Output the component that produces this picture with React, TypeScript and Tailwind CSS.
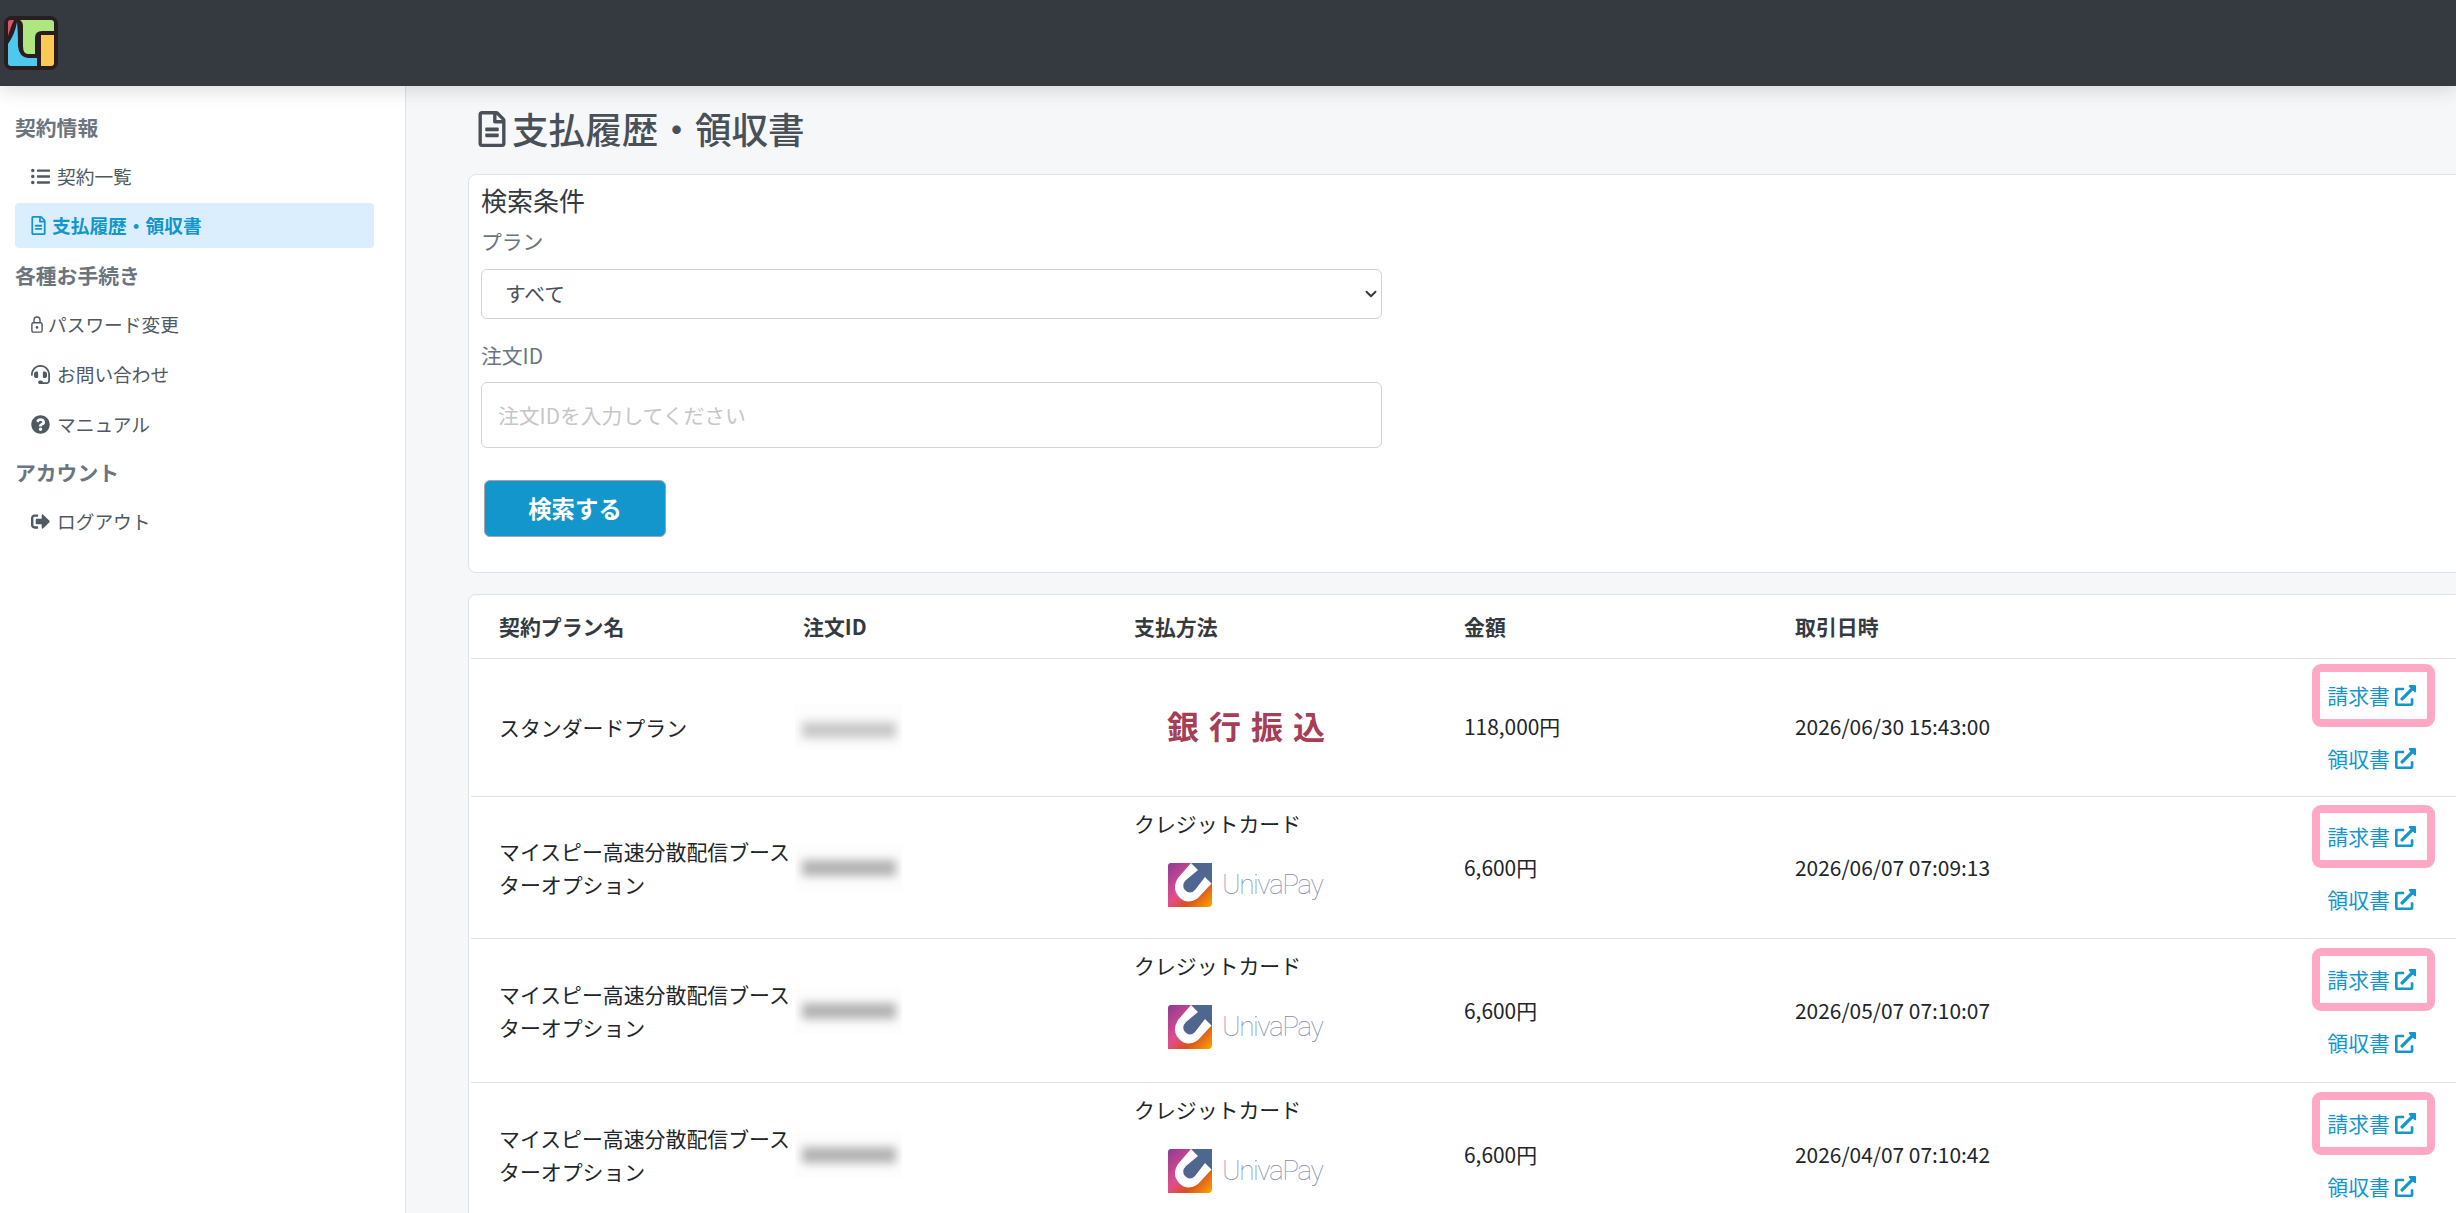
import { ChevronDown } from 'lucide-react';
import {
  FaExternalLinkAlt,
  FaHeadset,
  FaListUl,
  FaQuestionCircle,
  FaRegFileAlt,
  FaSignOutAlt,
} from 'react-icons/fa';
import type { ReactNode } from 'react';

const Logo = () => (
  <svg viewBox="0 0 54 54" className="h-[54px] w-[54px]">
    <rect x="0" y="0" width="54" height="54" rx="8" fill="#2a1d20" />
    <path d="M4 6 Q4 4 7 4 L10 4 Q7 10 4 20 Z" fill="#d9566b" />
    <path d="M4 28 Q11 18 13 6 Q14 16 14 30 Q15 41 24 42 L33 42 L33 50 L7 50 Q4 50 4 47 Z" fill="#4fc8ee" />
    <path d="M16 4 L47 4 Q50 4 50 7 L50 15 L38 15 Q31 15 31 22 L31 38 L24 38 Q19 38 19 30 L19 10 Q19 6 16 4 Z" fill="#aee67f" />
    <path d="M37 19 L50 19 L50 47 Q50 50 47 50 L37 50 Z" fill="#fdc955" />
  </svg>
);

const LockIcon = () => (
  <svg viewBox="0 0 12 17" className="h-[17px] w-[12px]" fill="none" stroke="currentColor" strokeWidth="1.4">
    <path d="M3 7 L3 4 Q3 1 6 1 Q9 1 9 4 L9 7" />
    <rect x="0.9" y="6.7" width="10.2" height="9.4" rx="1.6" />
    <circle cx="6" cy="11.4" r="1.3" fill="currentColor" stroke="none" />
  </svg>
);

const UnivaLogo = () => (
  <div className="flex items-center">
    <svg viewBox="0 0 44 44" className="h-[44px] w-[44px]">
      <defs>
        <linearGradient id="univaBg" x1="0" y1="0" x2="1" y2="1">
          <stop offset="0" stopColor="#8d3a94" />
          <stop offset="0.45" stopColor="#e24d8f" />
          <stop offset="0.68" stopColor="#d9501e" />
          <stop offset="1" stopColor="#fba800" />
        </linearGradient>
      </defs>
      <path d="M3 0 L44 0 L44 40 Q44 44 40 44 L0 44 L0 3 Q0 0 3 0 Z" fill="url(#univaBg)" />
      <path d="M23 0 L44 0 L44 20 L30 35 Q20 42 12 35 Q3 26 10 15 Z" fill="#ffffff" />
      <path d="M23 0 L44 0 L44 21 L37 14 L27 27 Q22 32 17 27 Q13 22 18 17 L30 7 Z" fill="#4e6690" />
    </svg>
    <span className="ml-[10px] font-['Roboto',sans-serif] text-[28px] leading-none font-thin tracking-[-1.5px] text-[#7f8fb6]">
      UnivaPay
    </span>
  </div>
);

const SectionTitle = ({ children }: { children: ReactNode }) => (
  <div className="px-[15px] text-[20.8px] leading-[30px] font-bold text-[#6c757d]">{children}</div>
);

const NavItem = ({ icon, label, gap = 'gap-[7px]' }: { icon: ReactNode; label: string; gap?: string }) => (
  <a className={`mx-[15px] flex h-[45px] items-center ${gap} rounded-[4px] pl-[16px] text-[18.72px] text-[#4f5962]`}>
    {icon}
    <span>{label}</span>
  </a>
);

const DocLink = ({ label, marked }: { label: string; marked?: boolean }) => (
  <a className="relative flex h-[30px] items-center justify-end gap-[5px] text-[20.9px] text-[#1296cc]">
    {label}
    <FaExternalLinkAlt className="h-[21px] w-[21px]" />
    {marked && (
      <span className="absolute top-[-17px] right-[-19px] h-[63px] w-[123px] rounded-[9px] border-[8px] border-[#ffa8c5]" />
    )}
  </a>
);

const Redacted = ({ faint }: { faint?: boolean }) => (
  <div className="ml-[-8px] flex h-[46px] w-[107px] items-center justify-center overflow-hidden bg-[#fdfdfd]">
    <div className={`h-[16px] w-[94px] blur-[5px] ${faint ? 'mt-[6px] bg-[#c8c8c8]' : 'bg-[#b2b2b2]'}`} />
  </div>
);

const BOOST = 'マイスピー高速分散配信ブースターオプション';

const rows = [
  { plan: 'スタンダードプラン', bank: true, amount: '118,000円', date: '2026/06/30 15:43:00', height: 'h-[138px]' },
  { plan: BOOST, amount: '6,600円', date: '2026/06/07 07:09:13', height: 'h-[142px]' },
  { plan: BOOST, amount: '6,600円', date: '2026/05/07 07:10:07', height: 'h-[144px]' },
  { plan: BOOST, amount: '6,600円', date: '2026/04/07 07:10:42', height: 'h-[144px]' },
];

const App = () => {
  return (
    <div className="flex h-screen flex-col overflow-hidden bg-[#f6f7f9] font-['Noto_Sans_CJK_JP',sans-serif] text-[20.8px] text-[#212529]">
      <header className="relative z-10 flex h-[86px] shrink-0 items-center bg-[#343a40] pl-[4px] shadow-[0_4px_18px_rgba(0,0,0,0.14)]">
        <Logo />
      </header>

      <div className="flex min-h-0 flex-1">
        <aside className="w-[406px] shrink-0 border-r border-[#dee2e6] bg-white pt-[26px]">
          <SectionTitle>契約情報</SectionTitle>
          <div className="mt-[12px]">
            <NavItem icon={<FaListUl className="h-[19px] w-[19px]" />} label="契約一覧" />
          </div>
          <a className="mx-[15px] mt-[4px] flex h-[45px] w-[359px] items-center gap-[6px] rounded-[4px] bg-[#dbeefe] pl-[16px] text-[18.72px] font-bold text-[#1296cc]">
            <FaRegFileAlt className="h-[19px] w-[15px]" />
            <span>支払履歴・領収書</span>
          </a>
          <div className="mt-[12px]">
            <SectionTitle>各種お手続き</SectionTitle>
          </div>
          <div className="mt-[12px] flex flex-col gap-[5px]">
            <NavItem icon={<LockIcon />} label="パスワード変更" gap="gap-[5px]" />
            <NavItem icon={<FaHeadset className="h-[19px] w-[19px]" />} label="お問い合わせ" />
            <NavItem icon={<FaQuestionCircle className="h-[19px] w-[19px]" />} label="マニュアル" />
          </div>
          <div className="mt-[10px]">
            <SectionTitle>アカウント</SectionTitle>
          </div>
          <div className="mt-[12px]">
            <NavItem icon={<FaSignOutAlt className="h-[19px] w-[19px]" />} label="ログアウト" />
          </div>
        </aside>

        <main className="min-w-0 flex-1 overflow-hidden pl-[62px]">
          <h1 className="mt-[17px] flex h-[52px] items-center gap-[6px] pl-[10px] text-[36.6px] leading-none font-medium text-[#495057]">
            <FaRegFileAlt className="h-[36px] w-[28px]" />
            支払履歴・領収書
          </h1>

          <section className="mt-[19px] mr-[-12px] h-[399px] rounded-[8px] border border-[#dee2e6] bg-white pt-[7px] pl-[12px]">
            <h2 className="text-[26px] leading-[36px] font-normal text-[#343a40]">検索条件</h2>
            <label className="mt-[8px] block leading-[30px] text-[#6c757d]">プラン</label>
            <div className="relative mt-[13px] w-[901px]">
              <select className="h-[50px] w-full appearance-none rounded-[6px] border border-[#ced4da] bg-white pl-[23px] text-[20.8px] text-[#495057]">
                <option>すべて</option>
              </select>
              <ChevronDown className="absolute top-[16px] right-[2px] h-[18px] w-[18px] text-[#343a40]" strokeWidth={2.5} />
            </div>
            <label className="mt-[21px] block leading-[30px] text-[#6c757d]">注文ID</label>
            <input
              placeholder="注文IDを入力してください"
              className="mt-[12px] block h-[66px] w-[901px] rounded-[6px] border border-[#ced4da] bg-white pl-[16px] text-[20.8px] placeholder:text-[#c4c7ca]"
            />
            <button className="mt-[32px] ml-[3px] block h-[57px] w-[182px] rounded-[6px] border border-[#a5a5a5] bg-[#1296cc] text-[23.4px] font-bold text-white">
              検索する
            </button>
          </section>

          <section className="mt-[21px] mr-[-12px] rounded-t-[8px] border border-[#dee2e6] bg-white pl-[2px] text-[20.9px]">
            <table className="w-full table-fixed border-collapse">
              <colgroup>
                <col className="w-[332px]" />
                <col className="w-[331px]" />
                <col className="w-[330px]" />
                <col className="w-[330px]" />
                <col />
              </colgroup>
              <thead>
                <tr className="h-[63px] border-b border-[#dee2e6] text-left text-[#343a40]">
                  <th className="pl-[28px] font-bold">契約プラン名</th>
                  <th className="font-bold">注文ID</th>
                  <th className="font-bold">支払方法</th>
                  <th className="font-bold">金額</th>
                  <th className="pl-[1px] font-bold">取引日時</th>
                </tr>
              </thead>
              <tbody>
                {rows.map((row, i) => {
                  const shift = row.bank ? '' : 'pt-[2px]';
                  return (
                    <tr key={row.date} className={`${row.height} border-b border-[#dee2e6]`}>
                      <td className={`pl-[28px] leading-[33px] ${shift}`}>{row.plan}</td>
                      <td className={shift}>
                        <Redacted faint={i === 0} />
                      </td>
                      {row.bank ? (
                        <td>
                          <div className="mb-[4px] pl-[33px] text-[32px] leading-none font-bold tracking-[10px] text-[#a63e56]">
                            銀行振込
                          </div>
                        </td>
                      ) : (
                        <td className="pt-[11px] align-top">
                          <span className="block leading-[30px]">クレジットカード</span>
                          <div className="mt-[25px] pl-[34px]">
                            <UnivaLogo />
                          </div>
                        </td>
                      )}
                      <td className={shift}>{row.amount}</td>
                      <td className={`pl-[1px] ${shift}`}>{row.date}</td>
                      <td className={`pr-[51px] ${shift}`}>
                        <div className="flex flex-col gap-[33px]">
                          <DocLink label="請求書" marked />
                          <DocLink label="領収書" />
                        </div>
                      </td>
                    </tr>
                  );
                })}
              </tbody>
            </table>
          </section>
        </main>
      </div>
    </div>
  );
};

export default App;
